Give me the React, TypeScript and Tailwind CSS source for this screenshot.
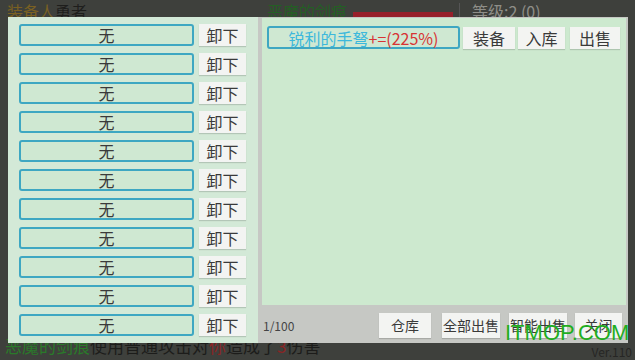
import React from "react";

const font = { fontFamily: '"Noto Sans CJK SC", "Noto Sans", sans-serif' };

const slots = Array.from({ length: 11 }, (_, i) => i);

function GrayButton({ label, className }: { label: string; className: string }) {
  return (
    <div
      className={`flex items-center justify-center bg-[#f3f4f2] text-[#3a3a3a] shadow-[0_1px_1px_rgba(0,0,0,0.15)] ${className}`}
    >
      {label}
    </div>
  );
}

export default function App() {
  return (
    <div className="relative flex h-[360px] w-[635px] flex-col overflow-hidden bg-[#3e403c]" style={font}>
      {/* background header, mostly hidden by the dialog */}
      <div className="flex h-[17px] items-start overflow-hidden pt-[3px] text-[16px] leading-[16px]">
        <span className="ml-[7px] text-[#7a6022]">装备人</span>
        <span className="text-[#1e1e1c]">勇者</span>
        <span className="ml-[180px] text-[#245f24]">恶魔的剑痕</span>
        <div className="ml-[6px] mt-[9px] h-[5px] w-[100px] bg-[#96202a]" />
        <div className="ml-[6px] h-[17px] w-[1px] bg-[#555]" />
        <span className="ml-[12px] text-[#8e8e88]">等级:2 (0)</span>
      </div>

      {/* dialog */}
      <div className="relative z-10 ml-[8px] flex h-[326px] w-[620px] bg-[#c6c8c4]">
        {/* equipped slots */}
        <div className="flex w-[250px] flex-col gap-[7px] bg-[#d3e9d7] pl-[11px] pt-[7px]">
          {slots.map((i) => (
            <div key={i} className="flex h-[22px] items-center gap-[5px]">
              <div className="flex h-[22px] w-[175px] items-center justify-center rounded-[3px] border-2 border-[#3ea7c2] bg-[#cfe8d2] text-[16px] text-[#3a3a3a]">
                无
              </div>
              <GrayButton label="卸下" className="h-[22px] w-[47px] text-[16px]" />
            </div>
          ))}
        </div>

        {/* bag */}
        <div className="ml-[4px] flex w-[364px] flex-col">
          <div className="mt-[1px] h-[287px] bg-[#cde9cf] pl-[5px] pt-[8px]">
            <div className="flex items-center">
              <div className="flex h-[23px] w-[193px] items-center justify-center rounded-[3px] border-2 border-[#3ea7c2] bg-[#cfe8d2] text-[16px]">
                <span className="text-[#3cb8dc]">锐利的手弩</span>
                <span className="text-[#d83434]">+=(225%)</span>
              </div>
              <GrayButton label="装备" className="ml-[3px] h-[22px] w-[52px] text-[16px]" />
              <GrayButton label="入库" className="ml-[3px] h-[22px] w-[47px] text-[16px]" />
              <GrayButton label="出售" className="ml-[5px] h-[22px] w-[50px] text-[16px]" />
            </div>
          </div>
          <div className="flex flex-1 items-center pt-[3px]">
            <span className="ml-[1px] w-[116px] text-[12px] text-[#444]">1/100</span>
            <GrayButton label="仓库" className="h-[25px] w-[52px] text-[14px]" />
            <GrayButton label="全部出售" className="ml-[11px] h-[25px] w-[58px] text-[14px]" />
            <GrayButton label="智能出售" className="ml-[9px] h-[25px] w-[58px] text-[14px]" />
            <GrayButton label="关闭" className="ml-[8px] h-[25px] w-[47px] text-[14px]" />
          </div>
        </div>
      </div>

      {/* background footer, top half hidden under the dialog */}
      <div className="flex flex-1 items-start text-[17px] leading-[17px]">
        <span className="-mt-[6px] ml-[5px] text-[#2a7a2a]">恶魔的剑痕</span>
        <span className="-mt-[6px] text-[#1c1c1a]">使用普通攻击对</span>
        <span className="-mt-[6px] text-[#8a2424]">你</span>
        <span className="-mt-[6px] text-[#1c1c1a]">造成了</span>
        <span className="-mt-[6px] text-[#8a2424]">3</span>
        <span className="-mt-[6px] text-[#1c1c1a]">伤害</span>
        <span className="ml-auto mr-[3px] mt-[3px] text-[12px] leading-[12px] text-[#262624]">Ver.110</span>
      </div>

      {/* watermark */}
      <div
        className="absolute left-[505px] top-[322px] z-20 text-[22px] leading-[22px] text-[#1fae1f]"
        style={{ fontFamily: '"Liberation Sans", Arial, sans-serif' }}
      >
        ITMOP.COM
      </div>
    </div>
  );
}
